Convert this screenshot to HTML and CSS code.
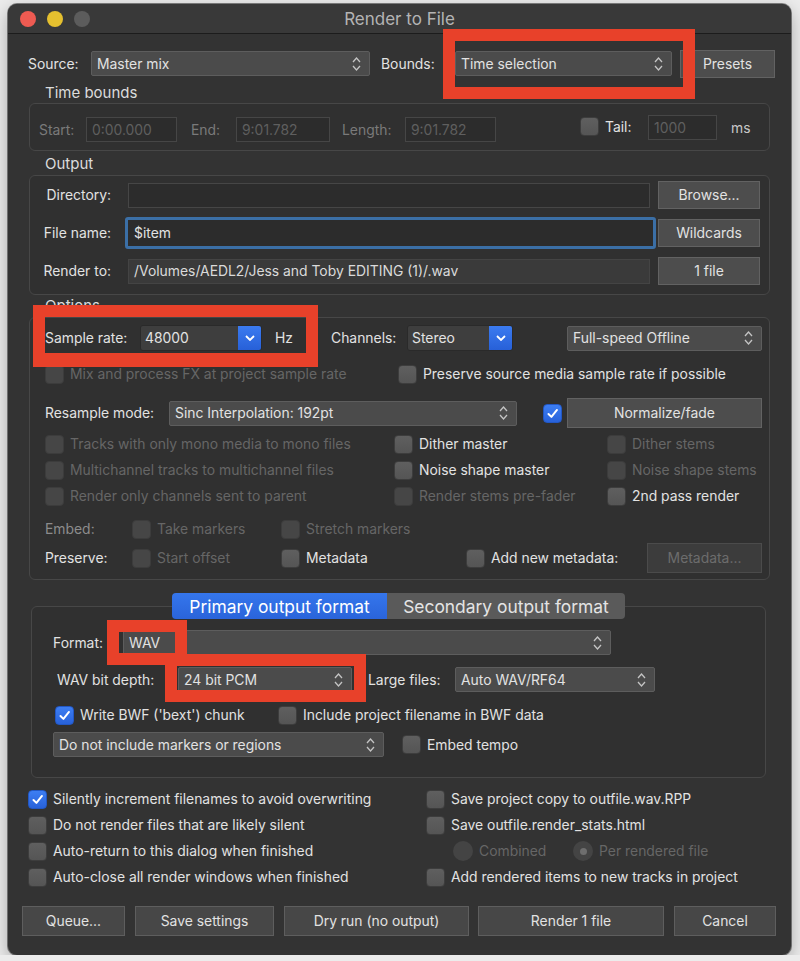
FILE: index.html
```html
<!DOCTYPE html>
<html lang="en">
<head>
  <meta charset="UTF-8">
  <title>Render to File</title>
  <link rel="stylesheet" href="styles.css">
</head>
<body>
  <div class="window">
    <!-- Title bar -->
    <div class="titlebar">
      <div class="lights">
        <span class="light red"></span><span class="light yellow"></span><span class="light idle"></span>
      </div>
      <div class="title">Render to File</div>
      <div></div>
    </div>

    <div class="content">
      <!-- Source / Bounds -->
      <div class="top-row">
        <span class="source-label">Source:</span>
        <div class="select source-select"><span>Master mix</span><svg class="updown" viewBox="0 0 9 16"><path d="M1 6 L4.5 2 L8 6 M1 10 L4.5 14 L8 10"/></svg></div>
        <span class="bounds-label">Bounds:</span>
        <div class="select bounds-select"><span>Time selection</span><svg class="updown" viewBox="0 0 9 16"><path d="M1 6 L4.5 2 L8 6 M1 10 L4.5 14 L8 10"/></svg></div>
        <div class="btn presets-btn">Presets</div>
      </div>

      <!-- Time bounds -->
      <div class="section-title time-title">Time bounds</div>
      <div class="group time-group">
        <span class="dim-label start-label">Start:</span>
        <div class="field disabled start-field">0:00.000</div>
        <span class="dim-label end-label">End:</span>
        <div class="field disabled end-field">9:01.782</div>
        <span class="dim-label length-label">Length:</span>
        <div class="field disabled length-field">9:01.782</div>
        <span class="cb tail-cb"></span>
        <span class="tail-label">Tail:</span>
        <div class="field disabled tail-field">1000</div>
        <span class="ms-label">ms</span>
      </div>

      <!-- Output -->
      <div class="section-title output-title">Output</div>
      <div class="group output-group">
        <div class="out-row">
          <span class="out-label">Directory:</span>
          <div class="field out-field"></div>
          <div class="btn out-btn">Browse...</div>
        </div>
        <div class="out-row">
          <span class="out-label">File name:</span>
          <div class="field out-field focused">$item</div>
          <div class="btn out-btn">Wildcards</div>
        </div>
        <div class="out-row">
          <span class="out-label">Render to:</span>
          <div class="field out-field path">/Volumes/AEDL2/Jess and Toby EDITING (1)/.wav</div>
          <div class="btn out-btn">1 file</div>
        </div>
      </div>

      <!-- Options -->
      <div class="section-title options-title">Options</div>
      <div class="group options-group">
        <div class="rate-row">
          <span class="rate-label">Sample rate:</span>
          <div class="dropdown rate-dd"><span class="dd-value">48000</span><span class="dd-arrow"><svg viewBox="0 0 10 6"><path d="M1 1 L5 5 L9 1"/></svg></span></div>
          <span class="hz-label">Hz</span>
          <span class="channels-label">Channels:</span>
          <div class="dropdown channels-dd"><span class="dd-value">Stereo</span><span class="dd-arrow"><svg viewBox="0 0 10 6"><path d="M1 1 L5 5 L9 1"/></svg></span></div>
          <div class="select speed-select"><span>Full-speed Offline</span><svg class="updown" viewBox="0 0 9 16"><path d="M1 6 L4.5 2 L8 6 M1 10 L4.5 14 L8 10"/></svg></div>
        </div>

        <div class="mix-row">
          <label class="check disabled mix-check"><span class="cb off"></span>Mix and process FX at project sample rate</label>
          <label class="check"><span class="cb"></span>Preserve source media sample rate if possible</label>
        </div>

        <div class="resample-row">
          <span class="resample-label">Resample mode:</span>
          <div class="select resample-select"><span>Sinc Interpolation: 192pt</span><svg class="updown" viewBox="0 0 9 16"><path d="M1 6 L4.5 2 L8 6 M1 10 L4.5 14 L8 10"/></svg></div>
          <span class="cb on normalize-cb"><svg viewBox="0 0 19 19"><path d="M5 10 L8.3 13.3 L14.5 5.5"/></svg></span>
          <div class="btn normalize-btn">Normalize/fade</div>
        </div>

        <div class="check-grid">
          <label class="check disabled"><span class="cb off"></span>Tracks with only mono media to mono files</label>
          <label class="check"><span class="cb"></span>Dither master</label>
          <label class="check disabled"><span class="cb off"></span>Dither stems</label>
          <label class="check disabled"><span class="cb off"></span>Multichannel tracks to multichannel files</label>
          <label class="check"><span class="cb"></span>Noise shape master</label>
          <label class="check disabled"><span class="cb off"></span>Noise shape stems</label>
          <label class="check disabled"><span class="cb off"></span>Render only channels sent to parent</label>
          <label class="check disabled"><span class="cb off"></span>Render stems pre-fader</label>
          <label class="check"><span class="cb"></span>2nd pass render</label>
        </div>

        <div class="embed-row">
          <span class="embed-label">Embed:</span>
          <label class="check disabled take-check"><span class="cb off"></span>Take markers</label>
          <label class="check disabled"><span class="cb off"></span>Stretch markers</label>
        </div>

        <div class="preserve-row">
          <span class="embed-label preserve-label">Preserve:</span>
          <label class="check disabled take-check"><span class="cb off"></span>Start offset</label>
          <label class="check metadata-check"><span class="cb"></span>Metadata</label>
          <label class="check add-meta-check"><span class="cb"></span>Add new metadata:</label>
          <div class="btn disabled meta-btn">Metadata...</div>
        </div>
      </div>

      <!-- Output format -->
      <div class="format-wrap">
        <div class="tabs">
          <div class="tab primary">Primary output format</div>
          <div class="tab secondary">Secondary output format</div>
        </div>
        <div class="group format-group">
          <div class="fmt-row">
            <span class="format-label">Format:</span>
            <div class="select format-select"><span>WAV</span><svg class="updown" viewBox="0 0 9 16"><path d="M1 6 L4.5 2 L8 6 M1 10 L4.5 14 L8 10"/></svg></div>
          </div>
          <div class="fmt-row depth-row">
            <span class="depth-label">WAV bit depth:</span>
            <div class="select depth-select"><span>24 bit PCM</span><svg class="updown" viewBox="0 0 9 16"><path d="M1 6 L4.5 2 L8 6 M1 10 L4.5 14 L8 10"/></svg></div>
            <span class="large-label">Large files:</span>
            <div class="select large-select"><span>Auto WAV/RF64</span><svg class="updown" viewBox="0 0 9 16"><path d="M1 6 L4.5 2 L8 6 M1 10 L4.5 14 L8 10"/></svg></div>
          </div>
          <div class="bwf-row">
            <label class="check bwf-check"><span class="cb on"><svg viewBox="0 0 19 19"><path d="M5 10 L8.3 13.3 L14.5 5.5"/></svg></span>Write BWF ('bext') chunk</label>
            <label class="check"><span class="cb"></span>Include project filename in BWF data</label>
          </div>
          <div class="markers-row">
            <div class="select markers-select"><span>Do not include markers or regions</span><svg class="updown" viewBox="0 0 9 16"><path d="M1 6 L4.5 2 L8 6 M1 10 L4.5 14 L8 10"/></svg></div>
            <label class="check tempo-check"><span class="cb"></span>Embed tempo</label>
          </div>
        </div>
      </div>

      <!-- General checkboxes -->
      <div class="final-checks">
        <label class="check"><span class="cb on"><svg viewBox="0 0 19 19"><path d="M5 10 L8.3 13.3 L14.5 5.5"/></svg></span>Silently increment filenames to avoid overwriting</label>
        <label class="check"><span class="cb"></span>Save project copy to outfile.wav.RPP</label>
        <label class="check"><span class="cb"></span>Do not render files that are likely silent</label>
        <label class="check"><span class="cb"></span>Save outfile.render_stats.html</label>
        <label class="check"><span class="cb"></span>Auto-return to this dialog when finished</label>
        <div class="radio-row">
          <label class="check disabled combined"><span class="radio"></span>Combined</label>
          <label class="check disabled"><span class="radio"><span class="dot"></span></span>Per rendered file</label>
        </div>
        <label class="check"><span class="cb"></span>Auto-close all render windows when finished</label>
        <label class="check"><span class="cb"></span>Add rendered items to new tracks in project</label>
      </div>

      <!-- Buttons -->
      <div class="buttons">
        <div class="btn b-queue">Queue...</div>
        <div class="btn b-save">Save settings</div>
        <div class="btn b-dry">Dry run (no output)</div>
        <div class="btn b-render">Render 1 file</div>
        <div class="btn b-cancel">Cancel</div>
      </div>
    </div>

    <!-- red annotation boxes -->
    <div class="mark mark-bounds"></div>
    <div class="mark mark-rate"></div>
    <div class="mark mark-format"></div>
    <div class="mark mark-depth"></div>
  </div>
</body>
</html>
```

FILE: styles.css
```css
/* Page */
body {
  margin: 0;
  background: #ececec;
  font-family: Inter, "Noto Sans", sans-serif;
  font-size: 13.9px;
  color: #e2e2e2;
}

.window {
  position: relative;
  width: 783px;
  height: 951px;
  margin: 4px 0 0 8px;
  background: #333333;
  border-radius: 9px;
  box-shadow: 0 0 0 1px rgba(0, 0, 0, 0.45), 0 6px 18px rgba(0, 0, 0, 0.3);
  overflow: hidden;
}

/* Title bar */
.titlebar {
  height: 29px;
  border-bottom: 1px solid #1c1c1c;
  background: #393939;
  display: grid;
  grid-template-columns: 1fr auto 1fr;
  align-items: center;
}

.lights {
  display: flex;
  gap: 11px;
  padding-left: 12px;
}

.light {
  width: 16px;
  height: 16px;
  border-radius: 50%;
}

.light.red { background: #ee5b52; }
.light.yellow { background: #e5c02f; }
.light.idle { background: #5c5c5c; }

.title {
  font-size: 17px;
  color: #b4b4b4;
}

.content {
  padding: 17px 21px 0 21px;
}

/* Common controls */
.select {
  display: flex;
  align-items: center;
  justify-content: space-between;
  box-sizing: border-box;
  height: 25px;
  padding: 0 8px 0 5px;
  background: #4b4b4b;
  border: 1px solid #5d5d5d;
  border-radius: 2px;
  white-space: nowrap;
  flex: none;
}

.updown {
  width: 9px;
  height: 16px;
  flex: none;
}

.updown path {
  fill: none;
  stroke: #c4c4c4;
  stroke-width: 1.3;
}

.dropdown {
  display: flex;
  box-sizing: border-box;
  height: 26px;
  border: 1px solid #2a2a2a;
  border-radius: 3px;
  overflow: hidden;
  flex: none;
}

.dd-value {
  flex: 1;
  display: flex;
  align-items: center;
  padding-left: 4px;
  background: #3e3e3e;
}

.dd-arrow {
  width: 23px;
  display: flex;
  align-items: center;
  justify-content: center;
  background: linear-gradient(#3b7bf0, #2760d8);
}

.dd-arrow svg {
  width: 10px;
  height: 6px;
}

.dd-arrow path {
  fill: none;
  stroke: #fff;
  stroke-width: 1.8;
}

.btn {
  display: flex;
  align-items: center;
  justify-content: center;
  box-sizing: border-box;
  height: 28px;
  background: #4d4d4d;
  border: 1px solid #626262;
  color: #e2e2e2;
  white-space: nowrap;
  flex: none;
}

.btn.disabled {
  background: #3c3c3c;
  border-color: #4b4b4b;
  color: #6c6c6c;
}

.field {
  display: flex;
  align-items: center;
  box-sizing: border-box;
  height: 25px;
  padding: 0 5px;
  background: #2c2c2c;
  border: 1px solid #464646;
  white-space: nowrap;
  flex: none;
}

.field.disabled {
  color: #5f5f5f;
}

.cb {
  width: 19px;
  height: 19px;
  flex: none;
  box-sizing: border-box;
  border-radius: 4px;
  background: linear-gradient(#5f5f5f, #555555);
  border: 1px solid #3d3d3d;
}

.cb.off {
  background: #464646;
  border-color: #3c3c3c;
}

.cb.on {
  background: linear-gradient(#3d7ef3, #2862da);
  border-color: #2257c4;
  display: flex;
}

.cb.on svg {
  width: 17px;
  height: 17px;
}

.cb.on path {
  fill: none;
  stroke: #fff;
  stroke-width: 2.2;
  stroke-linecap: round;
  stroke-linejoin: round;
}

.check {
  display: flex;
  align-items: center;
  gap: 6px;
  white-space: nowrap;
  flex: none;
}

.check.disabled {
  color: #666666;
}

.radio {
  width: 20px;
  height: 20px;
  flex: none;
  border-radius: 50%;
  background: #444444;
  display: flex;
  align-items: center;
  justify-content: center;
}

.radio .dot {
  width: 7px;
  height: 7px;
  border-radius: 50%;
  background: #6e6e6e;
}

.group {
  border: 1px solid #474747;
  border-radius: 6px;
  background: #303030;
}

.section-title {
  font-size: 15px;
  line-height: 18px;
  color: #dcdcdc;
  padding-left: 16px;
}

/* Source row */
.top-row {
  display: flex;
  align-items: center;
  height: 25px;
  margin: 0 -5px 0 -1px;
}

.top-row > span { flex: none; }
.source-label { width: 63px; }
.source-select { width: 279px; }
.bounds-label { width: 74px; margin-left: 11px; }
.bounds-select { width: 217px; }
.presets-btn { width: 95px; margin-left: 8px; }

/* Time bounds */
.time-title { padding-top: 8px; padding-bottom: 1px; }

.time-group {
  display: flex;
  align-items: center;
  padding: 13px 0 8px 9px;
}

.time-group > span { flex: none; }
.dim-label { color: #7a7a7a; }
.start-label { width: 47px; }
.start-field { width: 91px; }
.end-label { width: 45px; margin-left: 14px; }
.end-field { width: 94px; }
.length-label { width: 63px; margin-left: 12px; }
.length-field { width: 91px; }
.tail-cb { margin-left: 84px; margin-top: -6px; }
.tail-label { width: 43px; margin-left: 6px; margin-top: -6px; }
.tail-field { width: 69px; margin-top: -4px; }
.ms-label { margin-left: 14px; margin-top: -4px; color: #c8c8c8; }

/* Output */
.output-title { padding-top: 4px; padding-bottom: 2px; }

.output-group {
  display: flex;
  flex-direction: column;
  gap: 10px;
  padding: 5px 0 9px 0;
}

.out-row {
  display: flex;
  align-items: center;
  height: 28px;
}

.out-label {
  width: 98px;
  flex: none;
  box-sizing: border-box;
  padding-right: 17px;
  text-align: right;
}

.out-field { width: 522px; }

.out-field.focused {
  width: 531px;
  height: 32px;
  margin: 0 -6px 0 -3px;
  border: 3px solid #3b6fa6;
  border-radius: 3px;
  padding-left: 6px;
}

.out-field.path {
  background: #3a3a3a;
  border-color: #444;
  color: #dadada;
}

.out-btn { width: 102px; margin-left: 8px; }

/* Options */
.options-title { padding-top: 2px; padding-bottom: 2px; }

.options-group {
  padding: 7px 0 6px 15px;
}

.rate-row {
  display: flex;
  align-items: center;
  height: 26px;
}

.rate-row > span { flex: none; }
.rate-label { width: 95px; }
.rate-dd { width: 122px; }
.hz-label { width: 56px; margin-left: 13px; }
.channels-label { width: 76px; }
.channels-dd { width: 106px; }
.speed-select { width: 195px; margin-left: 54px; }

.mix-row {
  display: flex;
  align-items: center;
  height: 20px;
  margin-top: 13px;
}

.mix-check { width: 353px; }

.resample-row {
  display: flex;
  align-items: center;
  height: 30px;
  margin-top: 14px;
}

.resample-label { width: 124px; flex: none; }
.resample-select { width: 348px; }
.normalize-cb { margin-left: 26px; }
.normalize-btn { width: 195px; height: 30px; margin-left: 5px; }

.check-grid {
  display: grid;
  grid-template-columns: 349px 213px 1fr;
  grid-auto-rows: 20px;
  row-gap: 6px;
  margin-top: 6px;
}

.embed-row {
  display: flex;
  align-items: center;
  height: 20px;
  margin-top: 13px;
}

.embed-label { width: 87px; flex: none; color: #8c8c8c; }
.preserve-label { color: #e2e2e2; }
.take-check { width: 149px; }

.preserve-row {
  display: flex;
  align-items: center;
  height: 30px;
  margin-top: 4px;
}

.metadata-check { width: 185px; }
.add-meta-check { width: 181px; }
.meta-btn { width: 115px; height: 30px; }

/* Output format */
.format-wrap {
  margin-top: 13px;
}

.tabs {
  position: relative;
  z-index: 1;
  display: flex;
  justify-content: center;
  margin-left: -2px;
}

.tab {
  height: 26px;
  display: flex;
  align-items: center;
  justify-content: center;
  font-size: 17.4px;
}

.tab.primary {
  width: 215px;
  background: linear-gradient(#3576ec, #2a64da);
  color: #fff;
  border-radius: 4px 0 0 4px;
}

.tab.secondary {
  width: 238px;
  background: #5a5a5a;
  color: #e4e4e4;
  border-radius: 0 4px 4px 0;
}

.format-group {
  margin: -13px 4px 0 2px;
  padding: 23px 0 20px 21px;
}

.fmt-row {
  display: flex;
  align-items: center;
  height: 25px;
}

.fmt-row > span { flex: none; }
.format-label { width: 70px; }
.format-select { width: 488px; }
.depth-row { margin-top: 12px; }
.depth-label { width: 121px; margin-left: 4px; }
.depth-select { width: 174px; }
.large-label { width: 87px; margin-left: 16px; }
.large-select { width: 200px; }

.bwf-row {
  display: flex;
  align-items: center;
  height: 20px;
  margin-top: 13px;
}

.bwf-check { width: 223px; margin-left: 2px; }

.markers-row {
  display: flex;
  align-items: center;
  height: 25px;
  margin-top: 7px;
}

.markers-select { width: 331px; }
.tempo-check { margin-left: 18px; }

/* Final checkboxes */
.final-checks {
  display: grid;
  grid-template-columns: 398px 1fr;
  grid-auto-rows: 20px;
  row-gap: 6px;
  margin: 11px 0 0 -1px;
}

.radio-row {
  display: flex;
  align-items: center;
  padding-left: 27px;
}

.combined { width: 120px; }

/* Buttons */
.buttons {
  display: flex;
  margin: 19px 0 0 -7px;
}

.buttons .btn {
  height: 30px;
  margin-left: 10px;
  background: #474747;
  border-color: #5e5e5e;
}

.buttons .b-queue { width: 103px; margin-left: 0; }
.b-save { width: 139px; }
.b-dry { width: 185px; }
.buttons .b-render { width: 186px; margin-left: 9px; }
.b-cancel { width: 102px; }

/* Red annotation boxes drawn over the dialog */
.mark {
  position: absolute;
  box-sizing: border-box;
  border: 12px solid #e8412a;
}

.mark-bounds { left: 435px; top: 25px; width: 252px; height: 70px; }
.mark-rate { left: 25px; top: 301px; width: 285px; height: 62px; border-width: 12px 12px 14px 12px; }
.mark-format { left: 99px; top: 616px; width: 80px; height: 45px; }
.mark-depth { left: 157px; top: 650px; width: 201px; height: 48px; }
```
